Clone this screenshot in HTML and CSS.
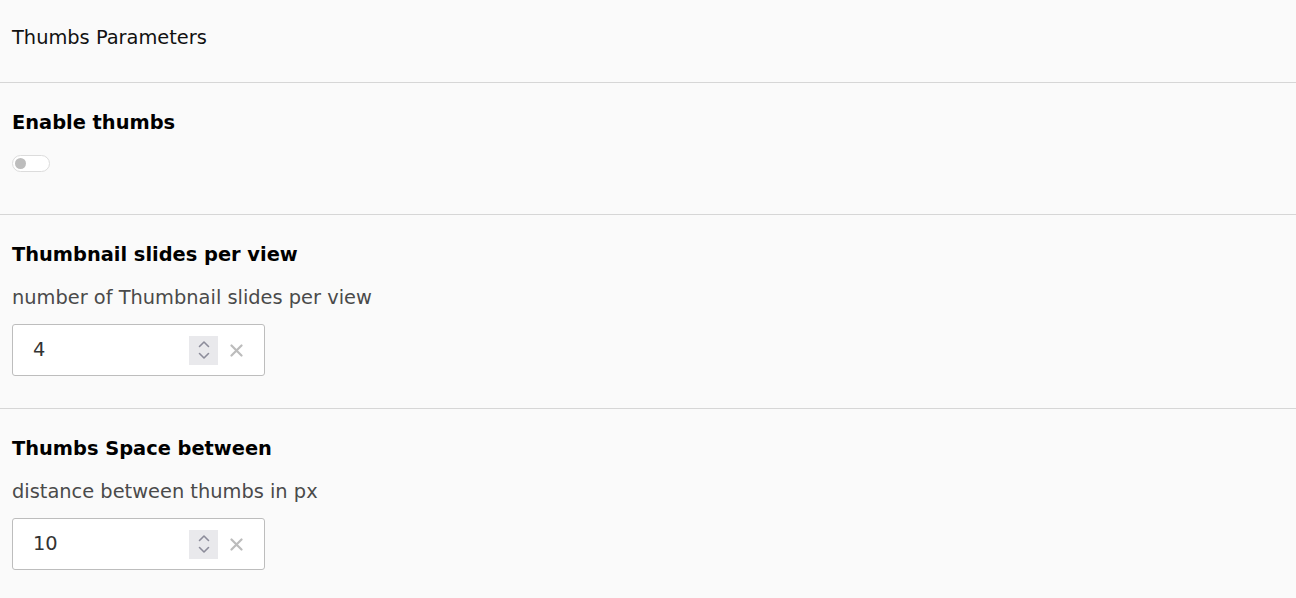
FILE: index.html
```html
<!DOCTYPE html>
<html lang="en">
<head>
<meta charset="utf-8">
<title>Thumbs Parameters</title>
<link rel="stylesheet" href="styles.css">
</head>
<body>
<div class="panel">
  <div class="panel-header">Thumbs Parameters</div>

  <div class="field">
    <div class="field-title">Enable thumbs</div>
    <span class="toggle"><span class="knob"></span></span>
  </div>

  <div class="field">
    <div class="field-title">Thumbnail slides per view</div>
    <div class="field-desc">number of Thumbnail slides per view</div>
    <div class="num-input">
      <span class="value">4</span>
      <span class="spinner">
        <svg width="14" height="22" viewBox="0 0 14 22"><path d="M2.5 7.5 L7 3 L11.5 7.5 M2.5 14.5 L7 19 L11.5 14.5" fill="none" stroke="#8c8c9a" stroke-width="1.6" stroke-linecap="round" stroke-linejoin="round"/></svg>
      </span>
      <span class="clear">
        <svg width="13" height="13" viewBox="0 0 13 13"><path d="M1.5 1.5 L11.5 11.5 M11.5 1.5 L1.5 11.5" stroke="#bcbcbc" stroke-width="2.2" stroke-linecap="round"/></svg>
      </span>
    </div>
  </div>

  <div class="field">
    <div class="field-title">Thumbs Space between</div>
    <div class="field-desc">distance between thumbs in px</div>
    <div class="num-input">
      <span class="value">10</span>
      <span class="spinner">
        <svg width="14" height="22" viewBox="0 0 14 22"><path d="M2.5 7.5 L7 3 L11.5 7.5 M2.5 14.5 L7 19 L11.5 14.5" fill="none" stroke="#8c8c9a" stroke-width="1.6" stroke-linecap="round" stroke-linejoin="round"/></svg>
      </span>
      <span class="clear">
        <svg width="13" height="13" viewBox="0 0 13 13"><path d="M1.5 1.5 L11.5 11.5 M11.5 1.5 L1.5 11.5" stroke="#bcbcbc" stroke-width="2.2" stroke-linecap="round"/></svg>
      </span>
    </div>
  </div>
</div>
</body>
</html>
```
FILE: styles.css
```css
html, body {
  margin: 0;
  padding: 0;
  background: #fafafa;
}
body {
  font-family: "DejaVu Sans", Verdana, sans-serif;
  font-size: 19.4px;
  color: #111;
}
.panel-header {
  box-sizing: border-box;
  height: 83px;
  padding: 27px 12px 0;
  line-height: 22px;
  border-bottom: 1px solid #d6d6d6;
}
.field {
  padding: 29px 12px 32px;
  border-bottom: 1px solid #d6d6d6;
}
.field:last-child {
  border-bottom: none;
}
.field-title {
  font-weight: bold;
  line-height: 22px;
  color: #000;
}
.field-desc {
  margin-top: 21px;
  line-height: 22px;
  color: #4a4a4a;
}
.toggle {
  display: block;
  box-sizing: border-box;
  margin-top: 21px;
  margin-bottom: 10px;
  width: 38px;
  height: 17px;
  border: 1px solid #dcdcdc;
  border-radius: 9px;
  background: #fff;
  position: relative;
}
.knob {
  position: absolute;
  left: 2px;
  top: 2px;
  width: 11px;
  height: 11px;
  border-radius: 50%;
  background: #bdbdbd;
}
.num-input {
  box-sizing: border-box;
  margin-top: 15px;
  width: 253px;
  height: 52px;
  border: 1px solid #bdbdbd;
  border-radius: 3px;
  background: #fff;
  display: flex;
  align-items: center;
  padding-left: 20px;
  color: #333;
}
.value {
  flex: 1;
  line-height: 22px;
}
.spinner {
  width: 29px;
  height: 29px;
  background: #e9e9ec;
  display: flex;
  align-items: center;
  justify-content: center;
}
.clear {
  width: 36px;
  display: flex;
  align-items: center;
  justify-content: center;
  margin-right: 10px;
}
```
